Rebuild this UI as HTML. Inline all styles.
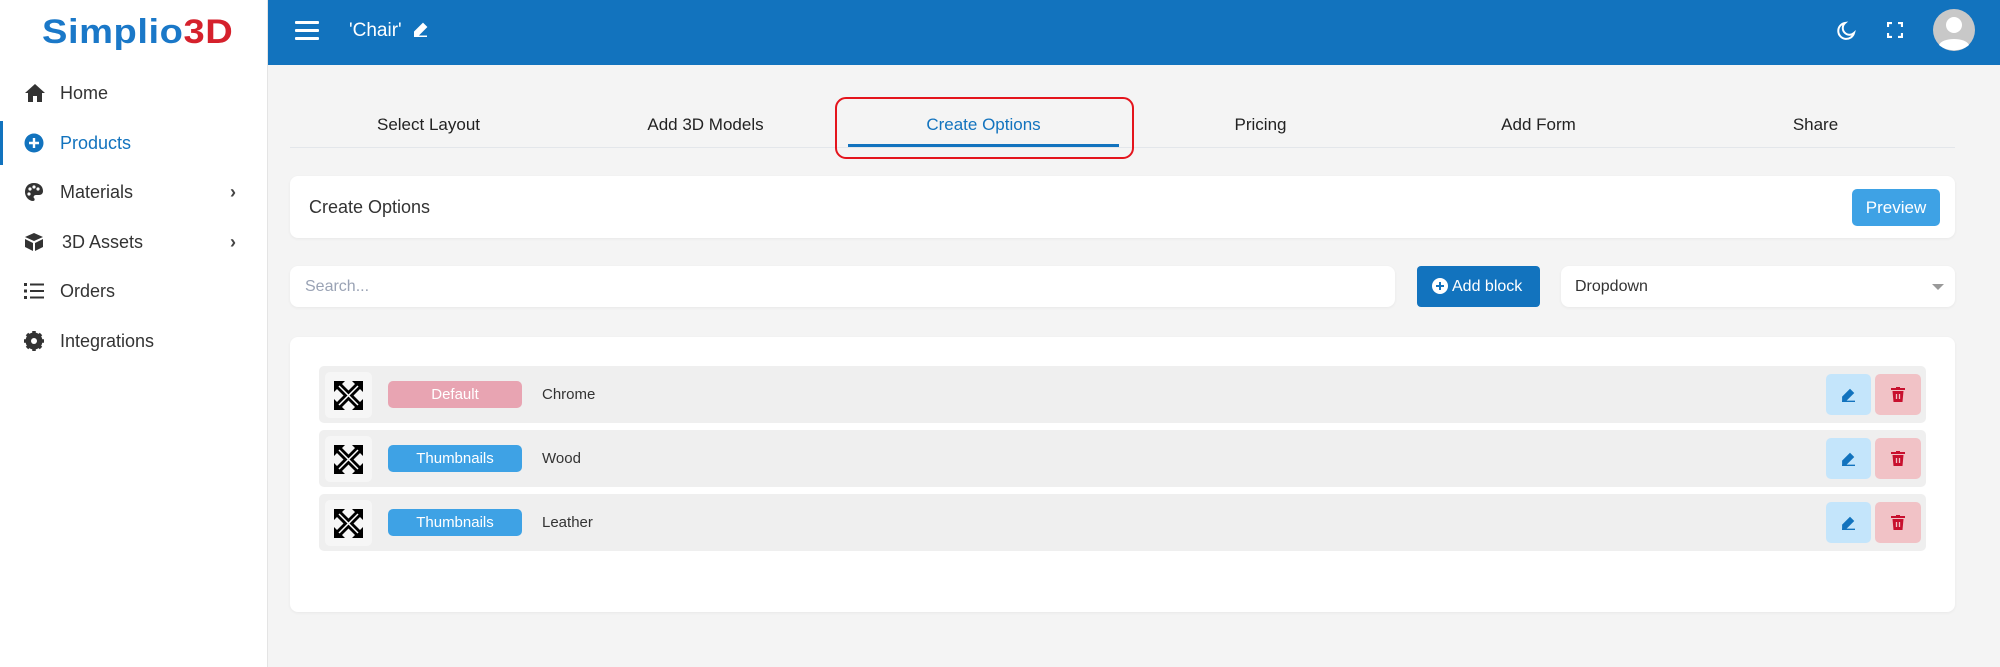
<!DOCTYPE html>
<html><head><meta charset="utf-8"><style>
*{box-sizing:border-box;margin:0;padding:0}
body{width:2000px;height:667px;background:#f4f4f4;font-family:"Liberation Sans",sans-serif;position:relative;overflow:hidden;color:#333}
.abs{position:absolute}
#side{left:0;top:0;width:268px;height:667px;background:#fff;border-right:1px solid #e4e4e4}
.nav{position:absolute;left:0;width:268px;height:40px;display:flex;align-items:center;font-size:18px;color:#333}
.nav svg{position:absolute;left:24px}
.nav span{position:absolute;left:60px}
.nav .chev{position:absolute;left:230px;font-size:18px;color:#444}
#hdr{left:268px;top:0;width:1732px;height:65px;background:#1273be}
.card{background:#fff;border-radius:8px;box-shadow:0 1px 3px rgba(0,0,0,.05)}
.tab{position:absolute;top:115px;width:277px;text-align:center;font-size:17px;color:#222}
.row{position:absolute;left:319px;width:1607px;height:57px;background:#efefef;border-radius:5px}
.handle{position:absolute;left:6px;top:6px;width:47px;height:46px;background:#f6f6f6;border-radius:5px}
.badge{position:absolute;left:69px;top:15px;width:134px;height:27px;border-radius:5px;color:#fff;font-size:15px;text-align:center;line-height:27px}
.lbl{position:absolute;left:223px;top:0;line-height:57px;font-size:15px;color:#333}
.eb{position:absolute;left:1507px;top:8px;width:45px;height:41px;background:#c4e5fb;border-radius:5px}
.db{position:absolute;left:1556px;top:8px;width:46px;height:41px;background:#f1c2c6;border-radius:5px}
</style></head><body>
<div id="side" class="abs">
<div class="abs" style="left:42px;top:13px;font-size:34px;font-weight:bold;letter-spacing:0.5px;transform:scaleX(1.12);transform-origin:left"><span style="color:#1a78c8">Simplio</span><span style="color:#d5212c">3D</span></div>
<div class="abs" style="left:0;top:121px;width:3px;height:44px;background:#1273be"></div>
<div class="nav" style="top:73px"><svg width="22" height="20" viewBox="0 0 22 20"><path d="M11 1 L1 10 H4 V19 H9 V13 H13 V19 H18 V10 H21Z" fill="#333"/></svg><span>Home</span></div>
<div class="nav" style="top:123px;color:#1273be"><svg width="20" height="20" viewBox="0 0 20 20"><circle cx="10" cy="10" r="9.5" fill="#1273be"/><path d="M10 5V15M5 10H15" stroke="#fff" stroke-width="2.4"/></svg><span>Products</span></div>
<div class="nav" style="top:172px"><svg width="20" height="20" viewBox="0 0 20 20"><path d="M10 1C4 1 1 5 1 10c0 5 4 9 8 9 2 0 2-2 1-3-1-1 0-3 2-3h3c3 0 4-2 4-4 0-5-4-8-9-8z" fill="#333"/><circle cx="6" cy="7" r="1.6" fill="#fff"/><circle cx="10" cy="5" r="1.6" fill="#fff"/><circle cx="14" cy="7" r="1.6" fill="#fff"/><circle cx="5" cy="12" r="1.6" fill="#fff"/></svg><span>Materials</span><b class="chev">›</b></div>
<div class="nav" style="top:222px"><svg width="20" height="20" viewBox="0 0 20 20"><path d="M10 1L19 5 10 9 1 5Z M1 7 9 11V19L1 15Z M19 7 11 11V19L19 15Z" fill="#333"/></svg><span style="left:62px">3D Assets</span><b class="chev">›</b></div>
<div class="nav" style="top:271px"><svg width="20" height="18" viewBox="0 0 20 18"><g fill="#333"><rect x="0" y="1" width="3" height="3"/><rect x="0" y="7.5" width="3" height="3"/><rect x="0" y="14" width="3" height="3"/><rect x="6" y="1.5" width="14" height="2"/><rect x="6" y="8" width="14" height="2"/><rect x="6" y="14.5" width="14" height="2"/></g></svg><span>Orders</span></div>
<div class="nav" style="top:321px"><svg width="20" height="20" viewBox="0 0 20 20"><circle cx="10" cy="10" r="6.5" fill="none" stroke="#333" stroke-width="4"/><g stroke="#333" stroke-width="3.5"><path d="M10 0V20M0 10H20M3 3L17 17M17 3L3 17"/></g><circle cx="10" cy="10" r="3" fill="#fff"/></svg><span>Integrations</span></div>
</div>
<div id="hdr" class="abs">
<svg class="abs" style="left:27px;top:21px" width="24" height="19"><g fill="#fff"><rect y="0" width="24" height="3" rx="1"/><rect y="8" width="24" height="3" rx="1"/><rect y="16" width="24" height="3" rx="1"/></g></svg>
<div class="abs" style="left:81px;top:20px;font-size:19px;color:#fff">'Chair'</div>
<svg class="abs" style="left:145px;top:21px" width="15" height="16" viewBox="0 0 15 16"><path d="M2 11L10 3 13 6 5 14H2Z M1 15.5H14" stroke="#fff" stroke-width="2" fill="#fff"/></svg>
<svg class="abs" style="left:1568px;top:21px" width="20" height="20" viewBox="0 0 20 20"><path d="M9 2A8 8 0 1 0 18 12 6 6 0 0 1 9 2Z" fill="none" stroke="#fff" stroke-width="2"/></svg>
<svg class="abs" style="left:1619px;top:22px" width="16" height="16" viewBox="0 0 16 16"><path d="M1 5V1H5M11 1H15V5M15 11V15H11M5 15H1V11" fill="none" stroke="#fff" stroke-width="2.2"/></svg>
<svg class="abs" style="left:1665px;top:9px" width="42" height="42" viewBox="0 0 42 42"><circle cx="21" cy="21" r="21" fill="#c8c8c8"/><circle cx="21" cy="16" r="8" fill="#fff"/><path d="M6 36C9 28 33 28 36 36 28 43 14 43 6 36Z" fill="#fff"/></svg>
</div>
<div class="tab" style="left:290px">Select Layout</div>
<div class="tab" style="left:567px">Add 3D Models</div>
<div class="tab" style="left:845px;color:#1273be">Create Options</div>
<div class="tab" style="left:1122px">Pricing</div>
<div class="tab" style="left:1400px">Add Form</div>
<div class="tab" style="left:1677px">Share</div>
<div class="abs" style="left:290px;top:147px;width:1665px;height:1px;background:#e3e6ea"></div>
<div class="abs" style="left:848px;top:144px;width:271px;height:3px;background:#1273be"></div>
<div class="abs" style="left:835px;top:97px;width:299px;height:62px;border:2px solid #e4141c;border-radius:11px"></div>
<div class="abs card" style="left:290px;top:176px;width:1665px;height:62px"></div>
<div class="abs" style="left:309px;top:197px;font-size:18px;color:#333">Create Options</div>
<div class="abs" style="left:1852px;top:189px;width:88px;height:37px;background:#3ea2e5;border-radius:5px;color:#fff;font-size:17px;text-align:center;line-height:37px">Preview</div>
<div class="abs card" style="left:290px;top:266px;width:1105px;height:41px"></div>
<div class="abs" style="left:305px;top:278px;font-size:16px;color:#9aa3b5">Search...</div>
<div class="abs" style="left:1417px;top:266px;width:123px;height:41px;background:#1273be;border-radius:4px;color:#fff;font-size:16px;line-height:41px;padding-left:15px"><svg style="vertical-align:-3px;margin-right:4px" width="16" height="16" viewBox="0 0 16 16"><circle cx="8" cy="8" r="8" fill="#fff"/><path d="M8 4V12M4 8H12" stroke="#1273be" stroke-width="2"/></svg>Add block</div>
<div class="abs card" style="left:1561px;top:266px;width:394px;height:41px"></div>
<div class="abs" style="left:1575px;top:278px;font-size:16px;color:#333">Dropdown</div>
<div class="abs" style="left:1932px;top:284px;border-left:6px solid transparent;border-right:6px solid transparent;border-top:6px solid #999"></div>
<div class="abs card" style="left:290px;top:337px;width:1665px;height:275px"></div>

<div class="row" style="top:366px"><div class="handle"><svg style="position:absolute;left:9px;top:9px" width="29" height="29" viewBox="0 0 29 29"><path d="M0 0H11L8 3 14.5 9.5 21 3 18 0H29V11L26 8 19.5 14.5 26 21 29 18V29H18L21 26 14.5 19.5 8 26 11 29H0V18L3 21 9.5 14.5 3 8 0 11Z" fill="#000"/><path d="M5 5L24 24M24 5L5 24" stroke="#fff" stroke-width="1.5"/></svg></div><div class="badge" style="background:#e8a4b2">Default</div><div class="lbl">Chrome</div><div class="eb"><svg style="position:absolute;left:15px;top:13px" width="15" height="15" viewBox="0 0 15 15"><path d="M2 10L9 3 12 6 5 13H2Z M1 14.5H14" stroke="#1273be" stroke-width="1.8" fill="#1273be"/></svg></div><div class="db"><svg style="position:absolute;left:16px;top:13px" width="14" height="15" viewBox="0 0 14 15"><path d="M0 2H14M5 0H9" stroke="#c8102e" stroke-width="2"/><path d="M1.5 4H12.5L11.5 15H2.5Z" fill="#c8102e"/><path d="M5.5 7V12M8.5 7V12" stroke="#f1c2c6" stroke-width="1.3"/></svg></div></div>
<div class="row" style="top:430px"><div class="handle"><svg style="position:absolute;left:9px;top:9px" width="29" height="29" viewBox="0 0 29 29"><path d="M0 0H11L8 3 14.5 9.5 21 3 18 0H29V11L26 8 19.5 14.5 26 21 29 18V29H18L21 26 14.5 19.5 8 26 11 29H0V18L3 21 9.5 14.5 3 8 0 11Z" fill="#000"/><path d="M5 5L24 24M24 5L5 24" stroke="#fff" stroke-width="1.5"/></svg></div><div class="badge" style="background:#3ea2e5">Thumbnails</div><div class="lbl">Wood</div><div class="eb"><svg style="position:absolute;left:15px;top:13px" width="15" height="15" viewBox="0 0 15 15"><path d="M2 10L9 3 12 6 5 13H2Z M1 14.5H14" stroke="#1273be" stroke-width="1.8" fill="#1273be"/></svg></div><div class="db"><svg style="position:absolute;left:16px;top:13px" width="14" height="15" viewBox="0 0 14 15"><path d="M0 2H14M5 0H9" stroke="#c8102e" stroke-width="2"/><path d="M1.5 4H12.5L11.5 15H2.5Z" fill="#c8102e"/><path d="M5.5 7V12M8.5 7V12" stroke="#f1c2c6" stroke-width="1.3"/></svg></div></div>
<div class="row" style="top:494px"><div class="handle"><svg style="position:absolute;left:9px;top:9px" width="29" height="29" viewBox="0 0 29 29"><path d="M0 0H11L8 3 14.5 9.5 21 3 18 0H29V11L26 8 19.5 14.5 26 21 29 18V29H18L21 26 14.5 19.5 8 26 11 29H0V18L3 21 9.5 14.5 3 8 0 11Z" fill="#000"/><path d="M5 5L24 24M24 5L5 24" stroke="#fff" stroke-width="1.5"/></svg></div><div class="badge" style="background:#3ea2e5">Thumbnails</div><div class="lbl">Leather</div><div class="eb"><svg style="position:absolute;left:15px;top:13px" width="15" height="15" viewBox="0 0 15 15"><path d="M2 10L9 3 12 6 5 13H2Z M1 14.5H14" stroke="#1273be" stroke-width="1.8" fill="#1273be"/></svg></div><div class="db"><svg style="position:absolute;left:16px;top:13px" width="14" height="15" viewBox="0 0 14 15"><path d="M0 2H14M5 0H9" stroke="#c8102e" stroke-width="2"/><path d="M1.5 4H12.5L11.5 15H2.5Z" fill="#c8102e"/><path d="M5.5 7V12M8.5 7V12" stroke="#f1c2c6" stroke-width="1.3"/></svg></div></div>
</body></html>
